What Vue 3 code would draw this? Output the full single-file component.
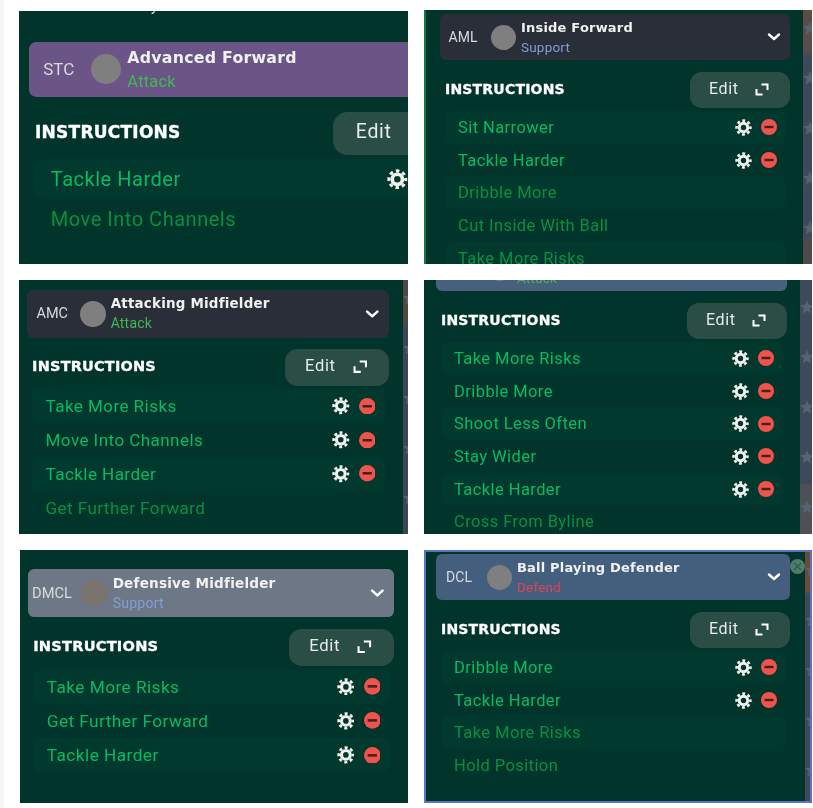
<script setup>
const panels = [
  {
    id: 'p1', pos: 'STC', name: 'Advanced Forward', duty: 'Attack', dutyType: 'attack', caption: 'Position and Duty', stars: 0,
    rows: [['Tackle Harder', true], ['Move Into Channels', false]]
  },
  {
    id: 'p2', pos: 'AML', name: 'Inside Forward', duty: 'Support', dutyType: 'support', stars: 5,
    rows: [['Sit Narrower', true], ['Tackle Harder', true], ['Dribble More', false], ['Cut Inside With Ball', false], ['Take More Risks', false]]
  },
  {
    id: 'p3', pos: 'AMC', name: 'Attacking Midfielder', duty: 'Attack', dutyType: 'attack', stars: 5,
    rows: [['Take More Risks', true], ['Move Into Channels', true], ['Tackle Harder', true], ['Get Further Forward', false]]
  },
  {
    id: 'p4', pos: 'AMR', name: 'Winger', duty: 'Attack', dutyType: 'attack', stars: 5,
    rows: [['Take More Risks', true], ['Dribble More', true], ['Shoot Less Often', true], ['Stay Wider', true], ['Tackle Harder', true], ['Cross From Byline', false]]
  },
  {
    id: 'p5', pos: 'DMCL', name: 'Defensive Midfielder', duty: 'Support', dutyType: 'support', stars: 0,
    rows: [['Take More Risks', true], ['Get Further Forward', true], ['Tackle Harder', true]]
  },
  {
    id: 'p6', pos: 'DCL', name: 'Ball Playing Defender', duty: 'Defend', dutyType: 'defend', stars: 5,
    rows: [['Dribble More', true], ['Tackle Harder', true], ['Take More Risks', false], ['Hold Position', false]]
  }
]
</script>

<template>
  <div class="page">
    <section v-for="panel in panels" :key="panel.id" class="panel" :class="panel.id">
      <div class="body">
        <div v-if="panel.caption" class="caption">{{ panel.caption }}</div>
        <header class="head">
          <span class="pos">{{ panel.pos }}</span>
          <span class="avatar"></span>
          <div class="role">
            <div class="name">{{ panel.name }}</div>
            <div class="duty" :class="panel.dutyType">{{ panel.duty }}</div>
          </div>
          <svg class="chevron" width="14" height="10" viewBox="0 0 14 10">
            <path d="M2 2.5 L7 7 L12 2.5" fill="none" stroke="#fff" stroke-width="2.4" stroke-linecap="round" stroke-linejoin="round" />
          </svg>
        </header>

        <div class="title-row">
          <h2>INSTRUCTIONS</h2>
          <button class="edit">
            <span>Edit</span>
            <svg width="14" height="13" viewBox="0 0 14 13">
              <path d="M6.5 1.5 H12.5 V7 M1.5 6 V11.5 H7.5" fill="none" stroke="#fff" stroke-width="2" />
            </svg>
          </button>
        </div>

        <ul class="rows">
          <li v-for="[label, on] in panel.rows" :key="label" class="row" :class="{ on }">
            <span class="label">{{ label }}</span>
            <template v-if="on">
              <svg class="gear" width="17" height="17" viewBox="0 0 17 17">
                <circle cx="8.5" cy="8.5" r="4.2" fill="none" stroke="#f2f2ec" stroke-width="3" />
                <circle cx="8.5" cy="8.5" r="6.9" fill="none" stroke="#f2f2ec" stroke-width="2.6" stroke-dasharray="2.9 2.52" stroke-dashoffset="1.45" />
              </svg>
              <svg class="minus" width="16" height="16" viewBox="0 0 16 16">
                <circle cx="8" cy="8" r="8" fill="#f0534b" />
                <rect x="3.5" y="6.8" width="9" height="2.4" fill="#3b2422" />
              </svg>
            </template>
          </li>
        </ul>
      </div>
      <div class="strip">
        <svg v-for="n in panel.stars" :key="n" class="star" width="14" height="14" viewBox="0 0 14 14">
          <polygon points="7,0 8.8,4.8 14,5.2 10,8.4 11.3,13.5 7,10.7 2.7,13.5 4,8.4 0,5.2 5.2,4.8" fill="#55646f" />
        </svg>
      </div>
      <span v-if="panel.id === 'p6'" class="close">
        <svg width="9" height="9" viewBox="0 0 9 9">
          <path d="M1 1 L8 8 M8 1 L1 8" stroke="#2f5a4c" stroke-width="1.4" />
        </svg>
      </span>
    </section>
  </div>
</template>

<style>
body {
  background: #fff;
}
</style>

<style scoped>
.page {
  display: grid;
  grid-template-columns: 389px 388px;
  grid-template-rows: 254px 254px 253px;
  gap: 16px;
  box-sizing: border-box;
  width: 813px;
  height: 808px;
  padding: 10px 0 0 15px;
  border-left: 4px solid #f5f5f5;
  font-family: Roboto, "Liberation Sans", sans-serif;
  color: #fff;
}

.panel {
  --w: 350px;
  position: relative;
  display: flex;
  overflow: hidden;
  box-sizing: border-box;
  background: #01352c;
  filter: blur(0.4px);
}

.body {
  flex: 1;
  min-width: 0;
  box-sizing: border-box;
}

.strip {
  display: flex;
  flex-direction: column;
  flex-shrink: 0;
  gap: 36px;
  overflow: hidden;
  padding-top: 11px;
  background: linear-gradient(#5a4d48 0, #5a4d48 15%, #3e4a5b 19%, #3e4a5b 88%, #504a4a 92%);
}

.star {
  flex-shrink: 0;
}

.caption {
  height: 12px;
  margin: -10px 0 23.8px 5px;
  font-size: 13px;
  line-height: 12px;
  color: #cfd8d4;
}

.head {
  display: flex;
  align-items: center;
  flex-shrink: 0;
  width: var(--w);
  height: 46px;
  border-radius: 6px;
  background: #2a2e39;
}

.pos {
  box-sizing: border-box;
  width: 46px;
  margin-right: 5px;
  text-align: center;
  font-size: 14px;
  color: #d8dadd;
}

.avatar {
  width: 25px;
  height: 25px;
  margin-right: 5px;
  border-radius: 50%;
  background: #807f7f;
}

.role {
  flex: 1;
}

.name {
  font-family: "DejaVu Sans", "Liberation Sans", sans-serif;
  font-size: 13px;
  line-height: 20px;
  font-weight: 700;
  letter-spacing: 0.2px;
  color: #f1f1f1;
}

.duty {
  font-size: 13.5px;
  line-height: 19px;
  letter-spacing: 0.2px;
}

.attack {
  color: #3fb950;
}

.support {
  color: #7f9fd6;
}

.defend {
  color: #dc4452;
}

.chevron {
  margin-right: 9px;
}

.title-row {
  display: flex;
  align-items: center;
  justify-content: space-between;
  width: var(--w);
  margin-top: 12px;
  padding-left: 5px;
  box-sizing: border-box;
}

h2 {
  margin: 0 0 3px;
  font-family: "DejaVu Sans", "Liberation Sans", sans-serif;
  font-size: 14px;
  font-weight: 700;
  letter-spacing: 0.2px;
  -webkit-text-stroke: 0.3px #fff;
  color: #fff;
}

.edit {
  display: flex;
  align-items: center;
  justify-content: space-between;
  box-sizing: border-box;
  width: 100px;
  height: 36px;
  padding: 0 21px 0 19px;
  border: 0;
  border-radius: 12px;
  background: #2a4e45;
  font: 16px Roboto, "Liberation Sans", sans-serif;
  letter-spacing: 0.6px;
  color: #e6ece9;
}

.edit span {
  padding-bottom: 4px;
}

.edit svg {
  margin-bottom: 2px;
}

.rows {
  width: calc(var(--w) - 9px);
  margin: 3px 0 0 5px;
  padding: 0;
  list-style: none;
}

.row {
  display: flex;
  align-items: center;
  box-sizing: border-box;
  height: 32.7px;
  padding: 0 9px 0 13px;
  border-radius: 8px;
}

.row:nth-child(odd) {
  background: #02392f;
}

.label {
  flex: 1;
  font-size: 16.5px;
  letter-spacing: 0.42px;
  color: #089040;
}

.row.on .label {
  color: #08ba62;
}

.gear {
  margin-right: 9px;
}

.close {
  position: absolute;
  top: 6.5px;
  right: 5.5px;
  display: flex;
  align-items: center;
  justify-content: center;
  width: 15px;
  height: 15px;
  border-radius: 50%;
  background: #4f7d6c;
}

/* each shot in the collage is cropped and scaled differently */
.p1 {
  margin-top: 1px;
}

.p1 .body {
  zoom: 1.215;
  padding-left: 8.2px;
}

.p1 .caption {
  margin-bottom: 23.2px;
}

.p1 .head {
  height: 45.5px;
  background: #6b5587;
}

.p1 .pos,
.p3 .pos {
  padding-left: 3px;
}

.p1 .title-row {
  margin-top: 12.2px;
}

.p1 .rows {
  margin-top: 3px;
}

.p2 {
  border-left: 2px solid #0a7a45;
}

.p2 .body {
  padding: 4px 0 0 14px;
}

.p2 .strip {
  width: 9px;
}

.p3 .body {
  zoom: 1.034;
  padding: 9.7px 0 0 7.7px;
}

.p3 .title-row,
.p5 .title-row {
  margin-top: 11px;
}

.p3 .strip {
  width: 5px;
  background: linear-gradient(#52483f 0, #52483f 15%, #3c4455 20%, #3c4455 100%);
}

.p4 {
  --w: 351px;
}

.p4 .body {
  margin-top: -35px;
  padding-left: 12px;
}

.p4 .head {
  background: #46607e;
}

.p4 .strip {
  width: 12px;
  padding-top: 20px;
  background: linear-gradient(#3d4a5c 0, #3d4a5c 80%, #4f5055 81%);
}

.p5 {
  margin-left: 1px;
}

.p5 .body {
  zoom: 1.046;
  padding: 18.2px 0 0 7.6px;
}

.p5 .head {
  background: #6d7785;
}

.p5 .avatar {
  background: #7b736e;
}

.p6 {
  --w: 354px;
  border: 2px solid #5b74bf;
}

.p6 .body {
  padding: 2px 0 0 10px;
}

.p6 .head {
  background: #445f7e;
}

.p6 .strip {
  width: 5px;
  background: linear-gradient(#6a4a38 0, #6a4a38 16%, #404859 17%, #404859 100%);
}
</style>
